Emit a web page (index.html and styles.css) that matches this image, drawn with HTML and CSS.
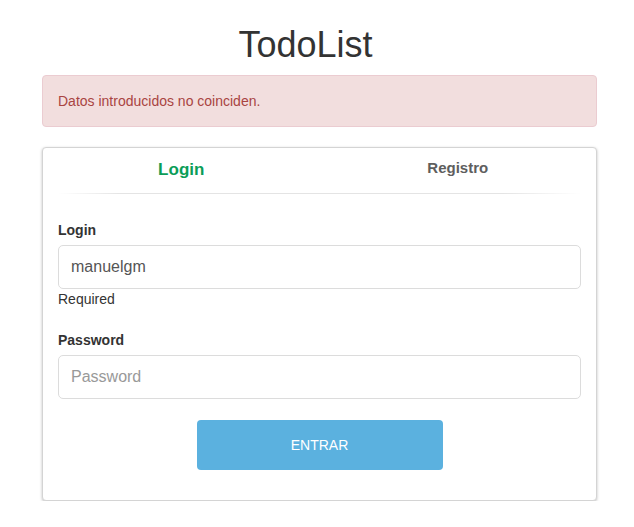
FILE: index.html
```html
<!DOCTYPE html>
<html lang="es">
<head>
<meta charset="utf-8">
<title>TodoList</title>
<link rel="stylesheet" href="styles.css">
</head>
<body>
<div class="wrapper">
  <h1 class="title">TodoList</h1>
  <div class="alert">Datos introducidos no coinciden.</div>
  <div class="card">
    <div class="tabs">
      <div class="tab tab-active">Login</div>
      <div class="tab tab-other">Registro</div>
    </div>
    <div class="divider"></div>
    <form class="form">
      <div class="group">
        <label class="label">Login</label>
        <input class="input" type="text" value="manuelgm">
        <div class="help">Required</div>
      </div>
      <div class="group">
        <label class="label">Password</label>
        <input class="input" type="password" placeholder="Password">
      </div>
      <div class="actions">
        <button class="btn" type="button">ENTRAR</button>
      </div>
    </form>
  </div>
</div>
</body>
</html>
```

FILE: styles.css
```css
html, body {
  margin: 0;
  padding: 0;
  background: #fff;
}
body {
  font-family: "Liberation Sans", Arial, sans-serif;
  font-size: 14px;
  line-height: 20px;
  color: #333;
}
.wrapper {
  margin-left: 42px;
  width: 555px;
}
.title {
  margin: 25px 0 10px;
  padding-right: 28px;
  font-size: 36px;
  line-height: 40px;
  font-weight: normal;
  text-align: center;
  color: #333;
}
.alert {
  box-sizing: border-box;
  padding: 15px;
  border: 1px solid #ebccd1;
  border-radius: 4px;
  background: #f2dede;
  color: #a94442;
  margin-bottom: 20px;
}
.card {
  box-sizing: border-box;
  border: 1px solid #d4d4d4;
  border-radius: 4px;
  background: #fff;
  box-shadow: 0 1px 3px rgba(0, 0, 0, 0.25);
}
.tabs {
  display: flex;
  align-items: flex-start;
  height: 45px;
}
.tab {
  flex: 1;
  text-align: center;
  font-weight: bold;
  line-height: 20px;
}
.tab-active {
  margin-top: 12px;
  font-size: 17px;
  color: #0b9d58;
}
.tab-other {
  margin-top: 10px;
  font-size: 15px;
  color: #5e5e5e;
}
.divider {
  height: 1px;
  margin: 0 15px;
  background: linear-gradient(to right, rgba(220,220,220,0), #e4e4e4 12%, #e4e4e4 85%, rgba(220,220,220,0));
}
.form {
  padding: 26px 15px 30px;
  margin: 0;
}
.group {
  margin-bottom: 21px;
}
.label {
  display: block;
  font-weight: bold;
  margin-bottom: 5px;
  color: #333;
}
.input {
  display: block;
  box-sizing: border-box;
  width: 100%;
  height: 44px;
  margin: 0;
  padding: 0 12px;
  border: 1px solid #dcdcdc;
  border-radius: 5px;
  font-family: "Liberation Sans", Arial, sans-serif;
  font-size: 16px;
  color: #555;
  background: #fff;
  outline: none;
}
.input::placeholder {
  color: #999;
}
.help {
  color: #333;
}
.actions {
  display: flex;
  justify-content: center;
}
.btn {
  width: 246px;
  height: 50px;
  border: none;
  border-radius: 4px;
  background: #5bb1df;
  color: #fff;
  font-family: "Liberation Sans", Arial, sans-serif;
  font-size: 14px;
  cursor: pointer;
}
```
